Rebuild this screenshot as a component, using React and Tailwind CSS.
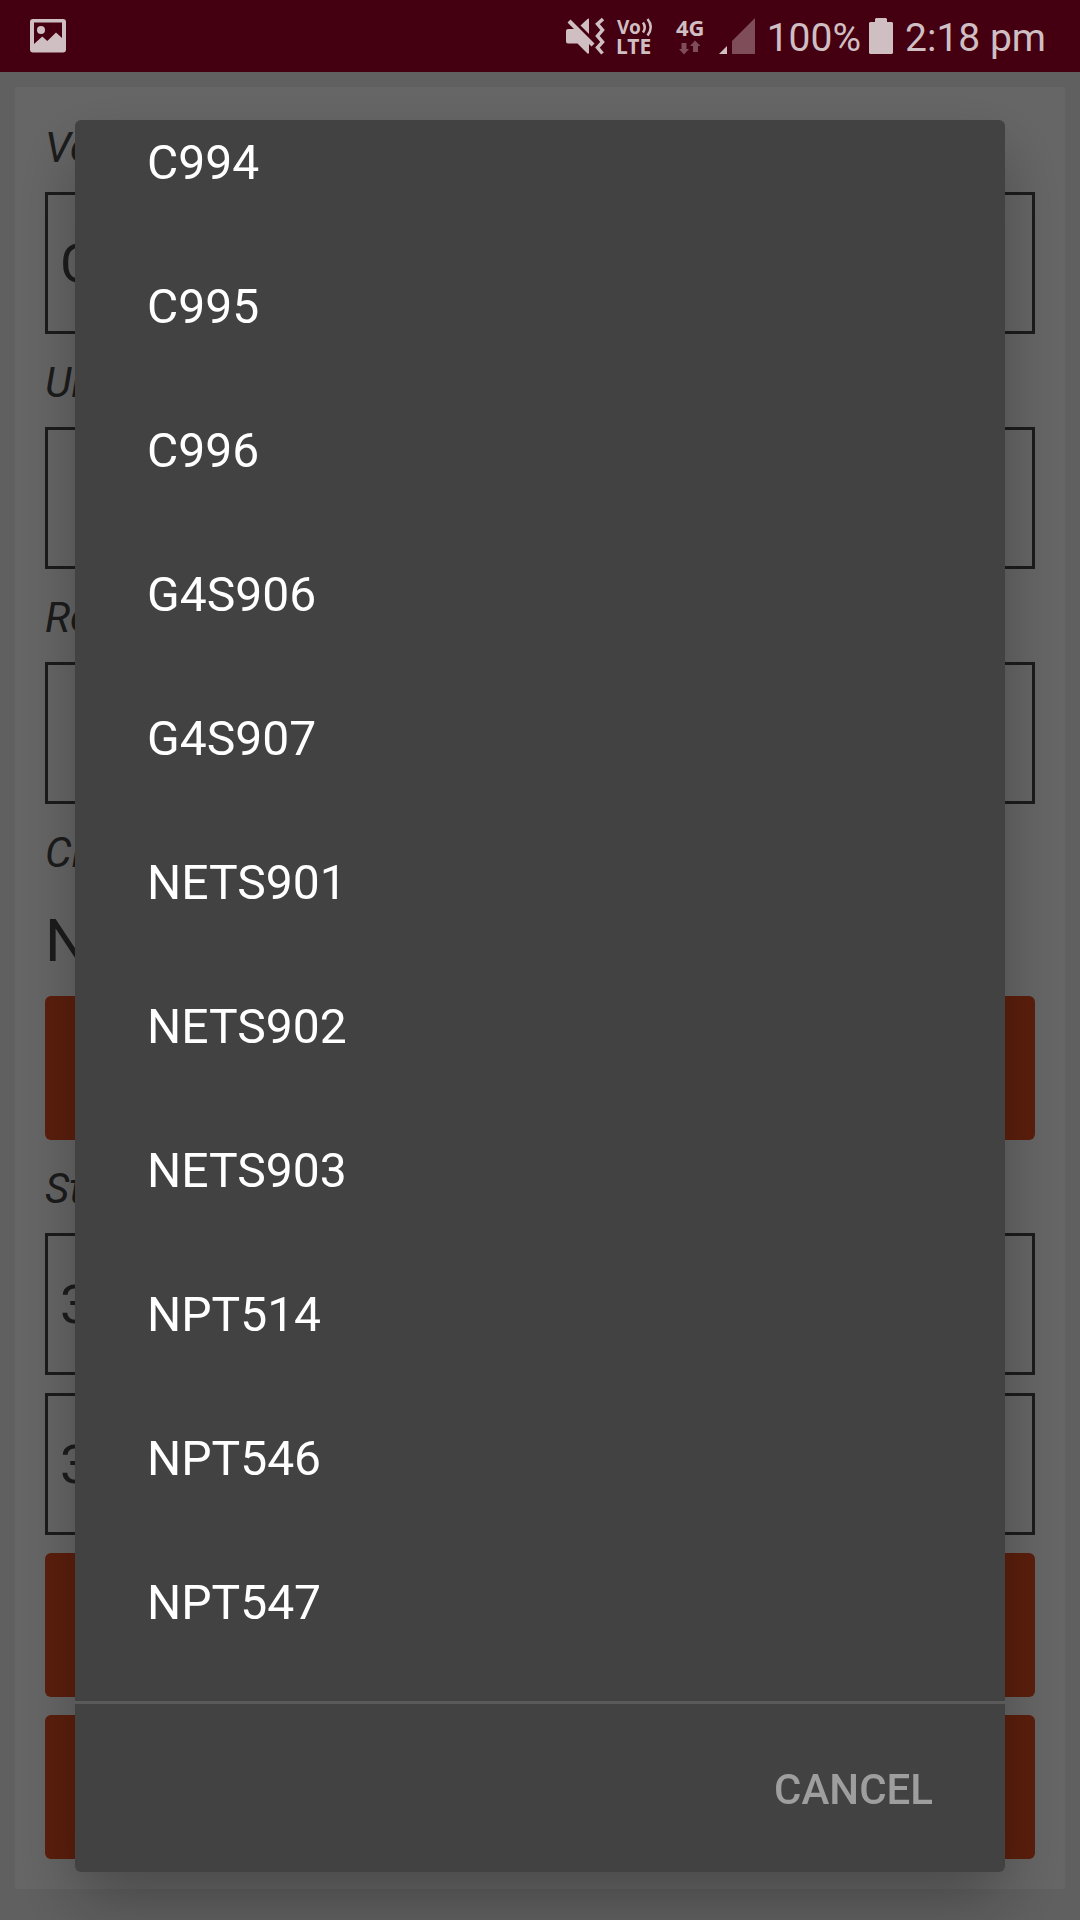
const VEHICLES = [
  "C994",
  "C995",
  "C996",
  "G4S906",
  "G4S907",
  "NETS901",
  "NETS902",
  "NETS903",
  "NPT514",
  "NPT546",
  "NPT547",
];

function PictureIcon() {
  return (
    <svg viewBox="30 0 36 72" className="h-[72px] w-9" fill="currentColor" aria-hidden="true">
      <path
        fillRule="evenodd"
        d="M33 19h30a3 3 0 0 1 3 3v27.500a3 3 0 0 1-3 3H33a3 3 0 0 1-3-3V22a3 3 0 0 1 3-3ZM34 22.500V44l8.300-7.500 5 4.500 8.700-8.500 6 5.500V22.500Z"
      />
      <circle cx="41" cy="30" r="4" />
    </svg>
  );
}

function MuteVibrateIcon() {
  return (
    <svg viewBox="562 0 40 72" className="h-[72px] w-10" fill="currentColor" aria-hidden="true">
      <path d="M577.500 25.500 584.500 19 586 18.500V34Z" />
      <path d="M564.500 22.500 567.500 19.500 591.500 43.500 588.500 46.500 586 44V53.500H584.500L574.500 43.500H565Q563 43.500 563 41.500V31Q563 29 565 29H571Z" />
      <path
        d="M600 19 594.500 24 599.500 30 594.500 36 599.500 42 594.500 47.500 599.500 53.500"
        fill="none"
        stroke="currentColor"
        strokeWidth="3.500"
      />
    </svg>
  );
}

function VolteIcon() {
  return (
    <svg viewBox="612 0 40 72" className="h-[72px] w-10" fill="currentColor" aria-label="VoLTE">
      <g fontFamily="Noto Sans, sans-serif" fontWeight="700">
        <text x="614" y="34" fontSize="19">Vo</text>
        <text x="613" y="54" fontSize="21">LTE</text>
      </g>
      <path
        d="M640 22.500q3.500 5 0 10M644.500 19q6.500 8 0 16.500"
        fill="none"
        stroke="currentColor"
        strokeWidth="2.500"
      />
    </svg>
  );
}

function DataIcon() {
  return (
    <svg viewBox="672 0 32 72" className="h-[72px] w-8" fill="currentColor" aria-label="4G">
      <text x="673" y="36" fontSize="22" fontWeight="700" fontFamily="Noto Sans, sans-serif">
        4G
      </text>
      <path
        fill="#7f4c5a"
        d="M678.500 43h5v6h2.500l-5 5.500-5-5.500h2.500ZM690 52v-6h-3l5-5.500 5.500 5.500H695v6Z"
      />
    </svg>
  );
}

function SignalIcon() {
  return (
    <svg viewBox="715 0 36 72" className="h-[72px] w-9" aria-hidden="true">
      <path fill="currentColor" d="M715 54 723 46V54Z" />
      <path fill="#7f4c5a" d="M728 41 751 18V54H728Z" />
    </svg>
  );
}

function BatteryIcon() {
  return (
    <svg viewBox="868 0 24 72" className="h-[72px] w-6" fill="currentColor" aria-hidden="true">
      <path d="M875 18h10l1 1v3h5l1 1v30l-1 1h-22l-1-1V23l1-1h5v-3Z" />
    </svg>
  );
}

function StatusBar() {
  return (
    <header className="relative z-20 flex h-[72px] items-center justify-between bg-[#440010] pr-[34px] pl-[30px] text-[#cfbfc3]">
      <PictureIcon />
      <div className="flex items-center text-[39px]">
        <MuteVibrateIcon />
        <span className="ml-2.5 flex"><VolteIcon /></span>
        <span className="ml-5 flex"><DataIcon /></span>
        <span className="ml-3 flex"><SignalIcon /></span>
        <span className="ml-3 pt-1">100%</span>
        <span className="ml-2 flex"><BatteryIcon /></span>
        <span className="ml-3 pt-1">2:18 pm</span>
      </div>
    </header>
  );
}

function FieldLabel({ htmlFor, children }) {
  return (
    <label htmlFor={htmlFor} className="block pt-6 pb-5 text-[42px] leading-[49px] italic">
      {children}
    </label>
  );
}

function Field({ id, value, label }) {
  return (
    <input
      id={id}
      aria-label={label}
      defaultValue={value}
      className="block h-[142px] w-full border-[3px] border-[#464646] bg-transparent px-3 text-[54px]"
    />
  );
}

function FormButton({ label }) {
  return (
    <button type="button" aria-label={label} className="block h-36 w-full rounded-md bg-[#e44d20]" />
  );
}

function VehicleForm() {
  return (
    <main className="p-[15px]">
      <form className="bg-white px-[30px] pt-3 pb-[30px] text-[#464646]">
        <FieldLabel htmlFor="vehicle">Veh</FieldLabel>
        <Field id="vehicle" value="C994" />
        <FieldLabel htmlFor="unit">Unit</FieldLabel>
        <Field id="unit" value="" />
        <FieldLabel htmlFor="reference">Ref</FieldLabel>
        <Field id="reference" value="" />
        <FieldLabel htmlFor="client">Client</FieldLabel>
        <output id="client" className="block pb-3 text-[60px] leading-[87px]">No</output>
        <FormButton label="Client" />
        <FieldLabel htmlFor="start">Start</FieldLabel>
        <div className="flex flex-col gap-[18px]">
          <Field id="start" value="30" />
          <Field id="start-time" label="Start time" value="30" />
          <FormButton label="Save" />
          <FormButton label="Close" />
        </div>
      </form>
    </main>
  );
}

function VehicleDialog() {
  return (
    <div className="fixed inset-0 z-10 flex bg-black/60 px-[75px] pt-[120px] pb-12">
      <div
        role="dialog"
        aria-label="Vehicle"
        className="flex flex-1 flex-col overflow-hidden rounded-md bg-[#424242] shadow-[0_30px_64px_rgba(0,0,0,0.28)]"
      >
        <div className="min-h-0 flex-1 overflow-hidden border-b-[3px] border-[#5a5a5a]">
          <ul className="-mt-[29px]">
            {VEHICLES.map((name) => (
              <li key={name}>
                <button type="button" className="block h-36 w-full px-[72px] text-left text-[48px] text-white">
                  {name}
                </button>
              </li>
            ))}
          </ul>
        </div>
        <div className="flex h-[168px] items-center justify-end px-[72px] pt-0.5">
          <button type="button" className="text-[42px] font-medium text-[#9e9e9e]">
            CANCEL
          </button>
        </div>
      </div>
    </div>
  );
}

export default function App() {
  return (
    <div className="min-h-screen bg-[#f0f0f0] font-['Roboto',sans-serif]">
      <StatusBar />
      <VehicleForm />
      <VehicleDialog />
    </div>
  );
}
